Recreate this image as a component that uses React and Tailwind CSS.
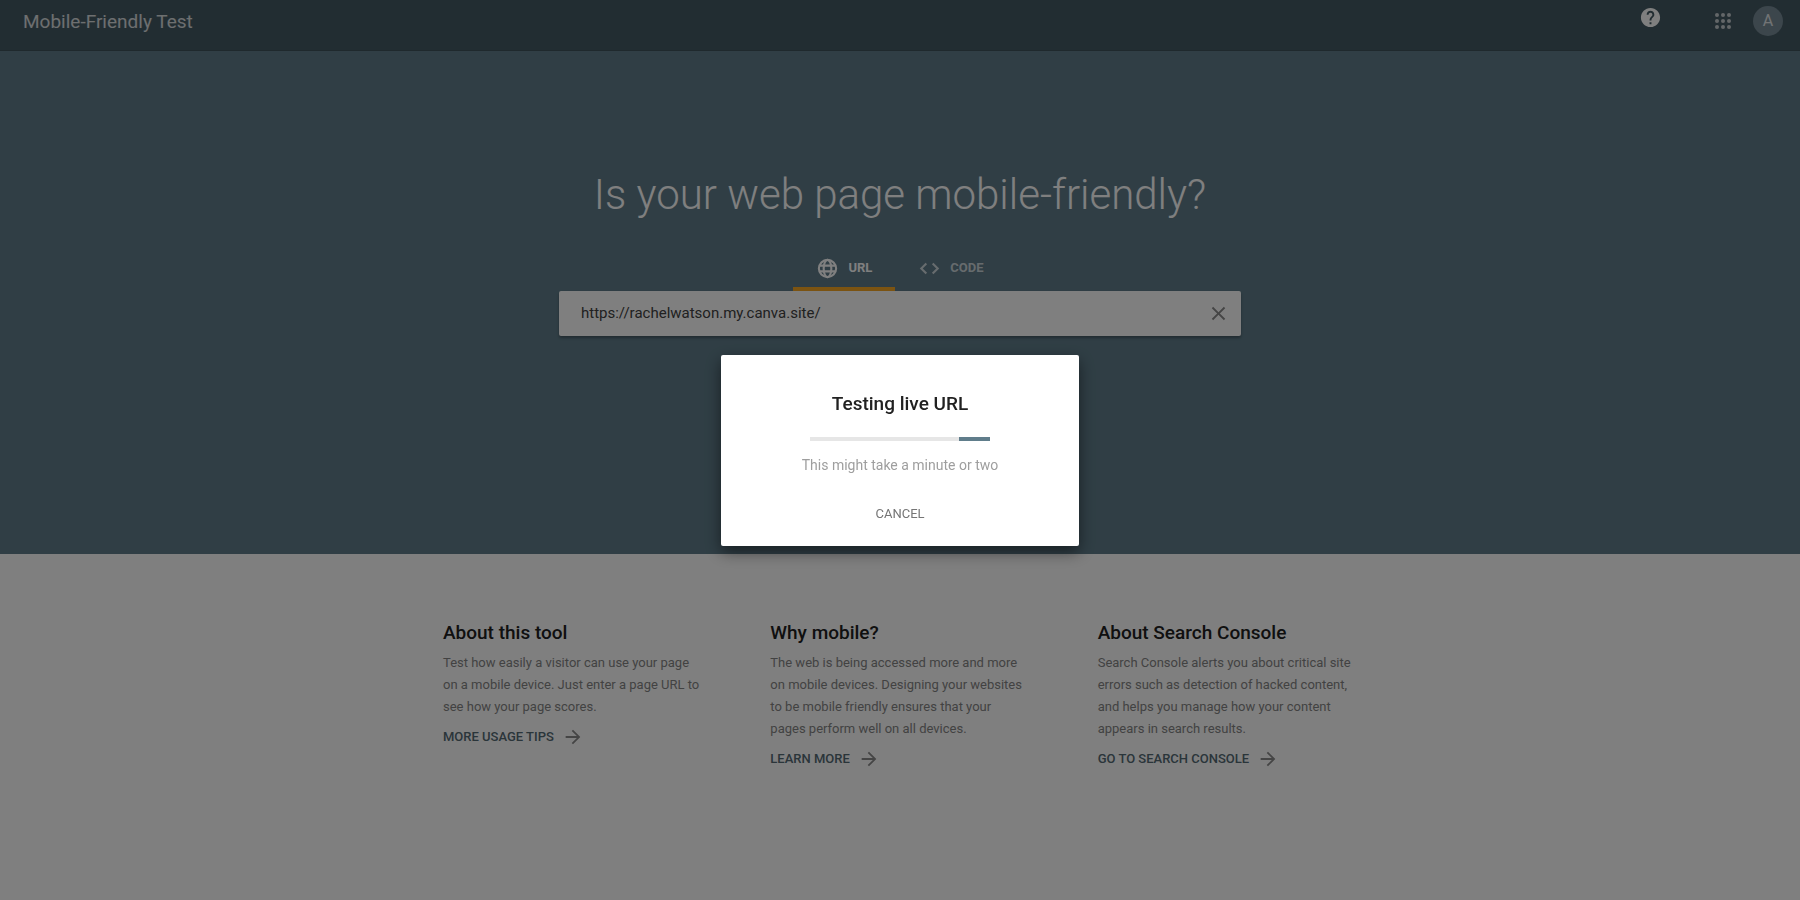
import { useState } from 'react';
import { MdHelp, MdClose, MdArrowForward } from 'react-icons/md';

const columns = [
  {
    title: 'About this tool',
    text: 'Test how easily a visitor can use your page on a mobile device. Just enter a page URL to see how your page scores.',
    link: 'MORE USAGE TIPS',
  },
  {
    title: 'Why mobile?',
    text: 'The web is being accessed more and more on mobile devices. Designing your websites to be mobile friendly ensures that your pages perform well on all devices.',
    link: 'LEARN MORE',
  },
  {
    title: 'About Search Console',
    text: 'Search Console alerts you about critical site errors such as detection of hacked content, and helps you manage how your content appears in search results.',
    link: 'GO TO SEARCH CONSOLE',
  },
];

const AppsIcon = () => (
  <svg viewBox="0 0 16 16" className="size-4" fill="currentColor">
    {[2, 8, 14].map((y) => [2, 8, 14].map((x) => <circle key={`${x}-${y}`} cx={x} cy={y} r="2" />))}
  </svg>
);

const GlobeIcon = () => (
  <svg viewBox="0 0 24 24" className="size-[23px]" fill="none" stroke="currentColor" strokeWidth="2.2">
    <circle cx="12" cy="12" r="9" />
    <ellipse cx="12" cy="12" rx="4" ry="9" />
    <path d="M3.5 9h17M3.5 15h17" />
  </svg>
);

const CodeIcon = () => (
  <svg viewBox="0 0 24 24" className="size-[23px]" fill="none" stroke="currentColor" strokeWidth="2.2">
    <path d="M8.7 6.7 3.4 12l5.3 5.3M15.3 6.7l5.3 5.3-5.3 5.3" />
  </svg>
);

const Header = () => (
  <header className="flex h-[51px] items-start justify-between border-b border-[#3e525b] bg-[#455a64] pl-[23px] pr-[17px]">
    <div className="pt-2 text-[19px] leading-7 text-white/80">Mobile-Friendly Test</div>
    <div className="flex items-start">
      <button type="button" aria-label="Help" className="mr-[53px] mt-[6px] text-white">
        <MdHelp className="size-[23px]" />
      </button>
      <button type="button" aria-label="Google apps" className="mr-[22px] mt-[13px] text-white/70">
        <AppsIcon />
      </button>
      <button type="button" aria-label="Account" className="mt-[6px] flex size-[30px] items-center justify-center rounded-full bg-[#788c98] text-base leading-none text-white/80">
        A
      </button>
    </div>
  </header>
);

const Hero = ({ url, setUrl }) => (
  <section className="flex h-[503px] flex-col items-center bg-[#607d8b] px-6 pt-[118px]">
    <h1 className="text-[42px] font-light leading-[52px] text-white">Is your web page mobile-friendly?</h1>
    <div className="mt-[25px] flex h-[45px] text-[13px] font-bold">
      <button type="button" className="flex items-center gap-[9px] border-b-4 border-[#f9a825] px-[23px] pt-[3px] text-white">
        <GlobeIcon />
        URL
      </button>
      <button type="button" className="flex items-center gap-[9px] border-b-4 border-transparent px-[23px] pt-[3px] text-white/70">
        <CodeIcon />
        CODE
      </button>
    </div>
    <div className="flex h-[45px] w-full max-w-[682px] items-center rounded-xs bg-white pl-[22px] pr-[11px] shadow-[0_2px_3px_rgba(0,0,0,0.3)]">
      <input
        type="text"
        aria-label="Enter a URL to test"
        className="min-w-0 flex-1 bg-transparent text-[15px] text-[#424242] outline-none"
        value={url}
        onChange={(e) => setUrl(e.target.value)}
      />
      <button type="button" aria-label="Clear" className="text-[#8a8a8a]" onClick={() => setUrl('')}>
        <MdClose className="size-[23px]" />
      </button>
    </div>
  </section>
);

const InfoColumn = ({ title, text, link }) => (
  <div>
    <h2 className="text-[19px] font-medium leading-7 text-[#212121]">{title}</h2>
    <p className="mt-[5px] max-w-[258px] text-[13px] leading-[22px] text-[#858585]">{text}</p>
    <a href="#" className="mt-2 flex items-center gap-2 text-[13px] font-medium leading-[22px] text-[#546a74]">
      {link}
      <MdArrowForward className="size-[22px] text-[#8a8a8a]" />
    </a>
  </div>
);

const TestingDialog = ({ onCancel }) => (
  <div className="fixed inset-0 flex items-center justify-center bg-black/50">
    <div
      role="dialog"
      aria-labelledby="dialog-title"
      className="flex w-[358px] flex-col items-center rounded-xs bg-white pb-[18px] pt-[35px] shadow-[0_6px_16px_rgba(0,0,0,0.5)]"
    >
      <h2 id="dialog-title" className="text-[19px] font-medium leading-7 text-[#212121]">Testing live URL</h2>
      <div className="mt-[19px] flex h-1 w-[180px] justify-end bg-[#e6e6e6]">
        <div className="w-[31px] bg-[#607d8b]" />
      </div>
      <p className="mt-[13px] text-sm leading-[22px] text-[#9e9e9e]">This might take a minute or two</p>
      <button type="button" className="mt-6 h-7 px-4 text-[13px] text-[#757575]" onClick={onCancel}>
        CANCEL
      </button>
    </div>
  </div>
);

const App = () => {
  const [url, setUrl] = useState('https://rachelwatson.my.canva.site/');
  const [testing, setTesting] = useState(true);

  return (
    <div className="min-h-screen bg-white font-['Roboto',sans-serif]">
      <Header />
      <Hero url={url} setUrl={setUrl} />
      <section className="mx-auto grid max-w-[914px] grid-cols-3 gap-[68px] pt-[65px]">
        {columns.map((col) => (
          <InfoColumn key={col.title} {...col} />
        ))}
      </section>
      {testing && <TestingDialog onCancel={() => setTesting(false)} />}
    </div>
  );
};

export default App;
